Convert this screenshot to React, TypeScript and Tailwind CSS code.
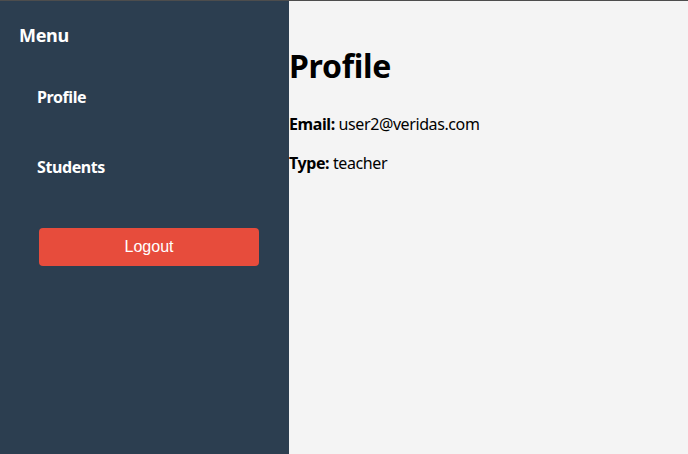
const links = [{ name: 'Profile' }, { name: 'Students' }];

export default function App() {
  return (
    <div
      className="flex h-screen flex-col border-t border-[#4d4d4d] bg-[#f4f4f4]"
      style={{ fontFamily: '"Noto Sans", sans-serif' }}
    >
      <div className="flex flex-1 flex-row">
        <aside className="flex w-[289px] flex-col bg-[#2c3e50] px-[19px] pt-[22px] text-white">
          <h3 className="text-[18px] leading-6 font-bold tracking-[-0.3px]">Menu</h3>
          <ul className="mt-[15px] ml-[18px]">
            {links.map(link => (
              <li key={link.name} className="py-[23px] text-[16px] leading-6 font-bold tracking-[-0.4px]">
                {link.name}
              </li>
            ))}
          </ul>
          <button
            className="mt-[26px] ml-[20px] h-[38px] w-[220px] rounded bg-[#e74c3c] text-[16px] text-white"
            style={{ fontFamily: '"Liberation Sans", Arial, sans-serif' }}
          >
            Logout
          </button>
        </aside>
        <main className="flex-1 pt-[45px] text-black">
          <h1 className="mb-[26px] text-[32px] leading-10 font-bold tracking-[-0.3px]">Profile</h1>
          <p className="mb-[15px] text-[16px] leading-6 tracking-[-0.4px]">
            <strong>Email:</strong> user2@veridas.com
          </p>
          <p className="text-[16px] leading-6 tracking-[-0.4px]">
            <strong>Type:</strong> teacher
          </p>
        </main>
      </div>
    </div>
  );
}
